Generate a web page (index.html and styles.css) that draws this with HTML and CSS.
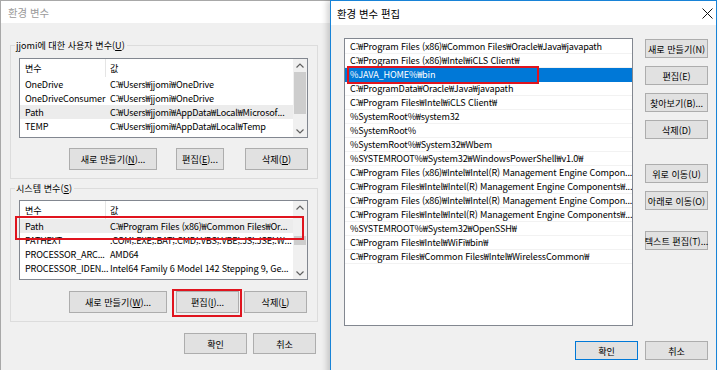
FILE: index.html
```html
<!DOCTYPE html>
<html lang="ko">
<head>
<meta charset="utf-8">
<title>환경 변수</title>
<link rel="stylesheet" href="styles.css">
</head>
<body>
<div class="desktop">
  <div class="win win-env">
    <div class="titlebar inactive">환경 변수</div>
    <div class="group group-user">
      <div class="group-label">jjomi에 대한 사용자 변수(<u>U</u>)</div>
      <div class="listview">
        <div class="lv-main">
          <div class="lv-head"><span class="c1">변수</span><span class="c2">값</span></div>
          <div class="lv-row"><span class="c1">OneDrive</span><span class="c2">C:₩Users₩jjomi₩OneDrive</span></div>
          <div class="lv-row"><span class="c1">OneDriveConsumer</span><span class="c2">C:₩Users₩jjomi₩OneDrive</span></div>
          <div class="lv-row sel"><span class="c1">Path</span><span class="c2">C:₩Users₩jjomi₩AppData₩Local₩Microsof...</span></div>
          <div class="lv-row"><span class="c1">TEMP</span><span class="c2">C:₩Users₩jjomi₩AppData₩Local₩Temp</span></div>
        </div>
        <div class="vscroll">
          <div class="sb-arrow"><svg width="8" height="5" viewBox="0 0 8 5"><path d="M0.5 4.5 L4 1 L7.5 4.5" fill="none" stroke="#606060" stroke-width="1.2"/></svg></div>
          <div class="sb-track"><div class="sb-thumb thumb-user"></div></div>
          <div class="sb-arrow"><svg width="8" height="5" viewBox="0 0 8 5"><path d="M0.5 0.5 L4 4 L7.5 0.5" fill="none" stroke="#606060" stroke-width="1.2"/></svg></div>
        </div>
      </div>
      <div class="btn-row">
        <button class="btn b-new1">새로 만들기(<u>N</u>)...</button>
        <button class="btn b-edit1">편집(<u>E</u>)...</button>
        <button class="btn b-del1">삭제(<u>D</u>)</button>
      </div>
    </div>
    <div class="group group-sys">
      <div class="group-label">시스템 변수(<u>S</u>)</div>
      <div class="listview">
        <div class="lv-main">
          <div class="lv-head"><span class="c1">변수</span><span class="c2">값</span></div>
          <div class="lv-row sel"><span class="c1">Path</span><span class="c2">C:₩Program Files (x86)₩Common Files₩Or...</span></div>
          <div class="lv-row"><span class="c1">PATHEXT</span><span class="c2">.COM;.EXE;.BAT;.CMD;.VBS;.VBE;.JS;.JSE;.W...</span></div>
          <div class="lv-row"><span class="c1">PROCESSOR_ARC...</span><span class="c2">AMD64</span></div>
          <div class="lv-row"><span class="c1">PROCESSOR_IDEN...</span><span class="c2">Intel64 Family 6 Model 142 Stepping 9, Ge...</span></div>
        </div>
        <div class="vscroll">
          <div class="sb-arrow"><svg width="8" height="5" viewBox="0 0 8 5"><path d="M0.5 4.5 L4 1 L7.5 4.5" fill="none" stroke="#606060" stroke-width="1.2"/></svg></div>
          <div class="sb-track"><div class="sb-thumb thumb-sys"></div></div>
          <div class="sb-arrow"><svg width="8" height="5" viewBox="0 0 8 5"><path d="M0.5 0.5 L4 4 L7.5 0.5" fill="none" stroke="#606060" stroke-width="1.2"/></svg></div>
        </div>
      </div>
      <div class="btn-row">
        <button class="btn b-new2">새로 만들기(<u>W</u>)...</button>
        <button class="btn b-edit2">편집(<u>I</u>)...</button>
        <button class="btn b-del2">삭제(<u>L</u>)</button>
      </div>
    </div>
    <div class="dlg-buttons">
      <button class="btn b-ok">확인</button>
      <button class="btn b-cancel">취소</button>
    </div>
    <div class="redbox rb-path"></div>
    <div class="redbox rb-edit"></div>
  </div>

  <div class="win win-edit">
    <div class="titlebar active">
      <span>환경 변수 편집</span>
      <svg class="close" width="11" height="11" viewBox="0 0 11 11"><path d="M0.5 0.5 L10.5 10.5 M10.5 0.5 L0.5 10.5" stroke="#111" stroke-width="1"/></svg>
    </div>
    <div class="edit-body">
      <div class="pathlist">
        <div class="p-row">C:₩Program Files (x86)₩Common Files₩Oracle₩Java₩javapath</div>
        <div class="p-row">C:₩Program Files (x86)₩Intel₩iCLS Client₩</div>
        <div class="p-row sel">%JAVA_HOME%₩bin</div>
        <div class="p-row">C:₩ProgramData₩Oracle₩Java₩javapath</div>
        <div class="p-row">C:₩Program Files₩Intel₩iCLS Client₩</div>
        <div class="p-row">%SystemRoot%₩system32</div>
        <div class="p-row">%SystemRoot%</div>
        <div class="p-row">%SystemRoot%₩System32₩Wbem</div>
        <div class="p-row">%SYSTEMROOT%₩System32₩WindowsPowerShell₩v1.0₩</div>
        <div class="p-row">C:₩Program Files (x86)₩Intel₩Intel(R) Management Engine Compon...</div>
        <div class="p-row">C:₩Program Files₩Intel₩Intel(R) Management Engine Components₩...</div>
        <div class="p-row">C:₩Program Files (x86)₩Intel₩Intel(R) Management Engine Compon...</div>
        <div class="p-row">C:₩Program Files₩Intel₩Intel(R) Management Engine Components₩...</div>
        <div class="p-row">%SYSTEMROOT%₩System32₩OpenSSH₩</div>
        <div class="p-row">C:₩Program Files₩Intel₩WiFi₩bin₩</div>
        <div class="p-row">C:₩Program Files₩Common Files₩Intel₩WirelessCommon₩</div>
      </div>
      <div class="side-buttons">
        <button class="btn sbtn">새로 만들기(N)</button>
        <button class="btn sbtn">편집(E)</button>
        <button class="btn sbtn">찾아보기(B)...</button>
        <button class="btn sbtn">삭제(D)</button>
        <button class="btn sbtn s-up">위로 이동(U)</button>
        <button class="btn sbtn">아래로 이동(O)</button>
        <button class="btn sbtn s-text">텍스트 편집(T)...</button>
      </div>
    </div>
    <div class="edit-footer">
      <button class="btn e-ok">확인</button>
      <button class="btn e-cancel">취소</button>
    </div>
    <div class="redbox rb-java"></div>
  </div>
</div>
</body>
</html>
```
FILE: styles.css
```css
* { box-sizing: border-box; }
html, body { margin: 0; padding: 0; }
body {
  width: 720px;
  height: 370px;
  overflow: hidden;
  background: #ffffff;
  font-family: "Noto Sans CJK KR", sans-serif;
  font-size: 9.1px;
  color: #000;
}
u { text-decoration: underline; text-underline-offset: 1px; }
.desktop { position: relative; width: 720px; height: 370px; overflow: hidden; }
.win { position: absolute; top: 0; background: #f0f0f0; }

/* left window */
.win-env {
  left: 0;
  width: 331px;
  height: 372px;
  border-left: 1px solid #a8a8a8;
  border-top: 1px solid #a8a8a8;
}
.titlebar {
  background: #fff;
  display: flex;
  align-items: center;
  white-space: nowrap;
  font-size: 10.4px;
}
.win-env .titlebar { height: 22px; padding-left: 7px; }
.inactive { color: #9a9a9a; }

.group {
  border: 1px solid #dcdcdc;
  margin: 0 13px 0 9px;
  padding: 0 9px 8px 8px;
}
.group-user { margin-top: 22px; }
.group-sys { margin-top: 9px; }
.group-label {
  width: max-content;
  height: 14px;
  line-height: 14px;
  margin: -8px 0 0 -4px;
  padding: 0 2px 0 1px;
  background: #f0f0f0;
  white-space: nowrap;
}
.listview {
  display: flex;
  height: 80px;
  border: 1px solid #828790;
  background: #fff;
  overflow: hidden;
  letter-spacing: -0.17px;
}
.group-user .listview { margin-top: 6px; }
.group-sys .listview { margin-top: 5px; }
.lv-main { flex: 1; min-width: 0; overflow: hidden; }
.lv-head, .lv-row { display: flex; white-space: nowrap; }
.lv-head { height: 18px; line-height: 18px; }
.lv-row { height: 14px; line-height: 14px; }
.lv-row.sel { background: #ececec; }
.c1 { width: 86px; flex: none; padding-left: 5px; overflow: visible; }
.lv-head .c1 { border-right: 1px solid #e5e5e5; }
.c2 { flex: 1; min-width: 0; padding-left: 4px; overflow: hidden; }

.vscroll {
  width: 14px;
  flex: none;
  background: #f0f0f0;
  display: flex;
  flex-direction: column;
}
.sb-arrow { height: 12px; display: flex; align-items: center; justify-content: center; }
.sb-track { flex: 1; padding: 0 1px; }
.sb-thumb { background: #cdcdcd; }
.thumb-user { margin-top: 1px; height: 42px; }
.thumb-sys { margin-top: 23px; height: 9px; }

.btn {
  font-family: inherit;
  font-size: inherit;
  color: #000;
  background: #e1e1e1;
  border: 1px solid #adadad;
  padding: 0;
  margin: 0;
  white-space: nowrap;
  display: flex;
  align-items: center;
  justify-content: center;
}
.btn-row { display: flex; height: 22px; }
.group-user .btn-row { margin-top: 10px; }
.group-sys .btn-row { margin-top: 11px; }
.btn-row .btn { height: 22px; }
.b-new1 { margin-left: 50px; width: 88px; }
.b-edit1 { margin-left: 19px; width: 48px; }
.b-del1 { margin-left: 21px; width: 63px; }
.b-new2 { margin-left: 50px; width: 98px; }
.b-edit2 { margin-left: 9px; width: 63px; }
.b-del2 { margin-left: 5px; width: 63px; }

.dlg-buttons { display: flex; margin: 11px 0 0 183px; }
.dlg-buttons .btn { height: 21px; width: 63px; }
.b-cancel { margin-left: 6px; }

.redbox { position: absolute; border: 2px solid #e0141e; }
.rb-path { left: 14px; top: 215px; width: 289px; height: 24px; }
.rb-edit { left: 171px; top: 288px; width: 70px; height: 28px; }

/* right window */
.win-edit {
  left: 330px;
  width: 387px;
  height: 380px;
  border: 1px solid #1883d7;
  box-shadow: -3px 0 6px rgba(0,0,0,0.18);
}
.win-edit .titlebar {
  height: 24px;
  padding: 0 3px 0 6px;
  justify-content: space-between;
}
.close { display: block; }
.edit-body { display: flex; padding: 13px 7px 0 13px; }
.pathlist {
  width: 289px;
  height: 288px;
  flex: none;
  border: 1px solid #828790;
  background: #fff;
  padding-top: 1px;
  overflow: hidden;
  letter-spacing: -0.15px;
}
.p-row {
  height: 14px;
  line-height: 13px;
  padding-left: 5px;
  border-bottom: 1px solid #f2f2f2;
  white-space: nowrap;
  overflow: hidden;
}
.p-row.sel { background: #0078d7; color: #fff; border-bottom-color: #0078d7; }
.side-buttons {
  display: flex;
  flex-direction: column;
  gap: 8px;
  margin: 1px 0 0 12px;
  width: 63px;
}
.sbtn { height: 19px; width: 63px; }
.s-up { margin-top: 17px; }
.s-text { margin-top: 13px; }
.edit-footer {
  display: flex;
  justify-content: flex-end;
  gap: 7px;
  padding: 15px 8px 0 0;
}
.edit-footer .btn { width: 63px; height: 19px; }
.e-ok { border-color: #0078d7; }
.rb-java { left: 16px; top: 65px; width: 192px; height: 18px; }
```
